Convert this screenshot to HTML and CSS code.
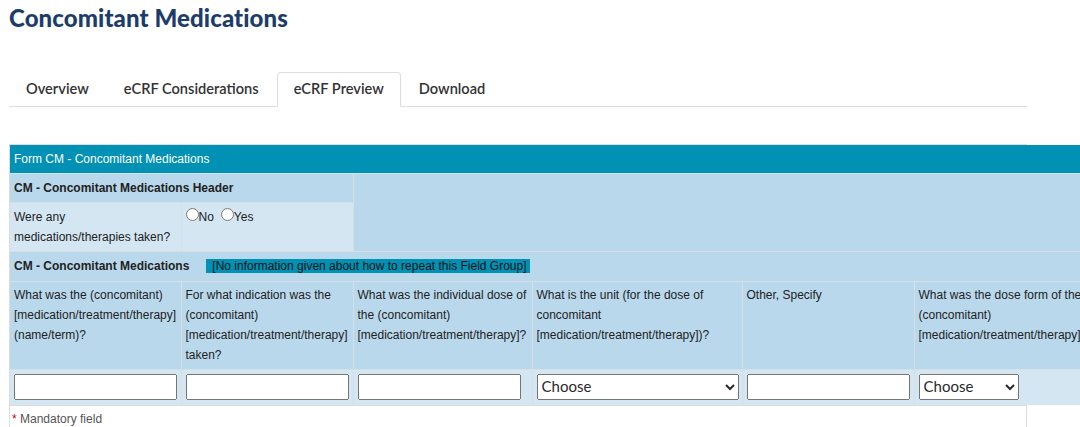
FILE: index.html
```html
<!DOCTYPE html>
<html lang="en">
<head>
<meta charset="utf-8">
<title>Concomitant Medications</title>
<link rel="stylesheet" href="styles.css">
</head>
<body>
<div class="page">
  <h1 class="title">Concomitant Medications</h1>
  <ul class="tabs">
    <li class="tab">Overview</li>
    <li class="tab">eCRF Considerations</li>
    <li class="tab active">eCRF Preview</li>
    <li class="tab">Download</li>
  </ul>
  <div class="panel">
    <table class="form">
      <colgroup>
        <col class="c1"><col class="c2"><col class="c3"><col class="c4"><col class="c5"><col class="c6">
      </colgroup>
      <tr>
        <td colspan="6" class="form-title">Form CM - Concomitant Medications</td>
      </tr>
      <tr>
        <td colspan="2" class="group">CM - Concomitant Medications Header</td>
        <td colspan="4" rowspan="2" class="blank"></td>
      </tr>
      <tr>
        <td class="light">Were any medications/therapies taken?</td>
        <td class="light radios"><input type="radio" name="taken" class="radio"><span class="opt">No</span><input type="radio" name="taken" class="radio"><span class="opt">Yes</span></td>
      </tr>
      <tr>
        <td colspan="6" class="group group2">CM - Concomitant Medications<span class="note">[No information given about how to repeat this Field Group]</span></td>
      </tr>
      <tr class="heads">
        <td>What was the (concomitant) [medication/treatment/therapy] (name/term)?</td>
        <td>For what indication was the (concomitant) [medication/treatment/therapy] taken?</td>
        <td>What was the individual dose of the (concomitant) [medication/treatment/therapy]?</td>
        <td>What is the unit (for the dose of concomitant [medication/treatment/therapy])?</td>
        <td>Other, Specify</td>
        <td>What was the dose form of the (concomitant) [medication/treatment/therapy]?</td>
      </tr>
      <tr class="inputs">
        <td><input type="text" class="field"></td>
        <td><input type="text" class="field"></td>
        <td><input type="text" class="field"></td>
        <td><select class="choose wide"><option>Choose</option></select></td>
        <td><input type="text" class="field"></td>
        <td><select class="choose narrow"><option>Choose</option></select></td>
      </tr>
    </table>
    <div class="mandatory"><span class="star">*</span> Mandatory field</div>
  </div>
</div>
</body>
</html>
```
FILE: styles.css
```css
html, body {
  margin: 0;
  padding: 0;
  overflow: hidden;
  background: #fff;
}
.page {
  padding: 0 9px;
  width: 1018px;
}
.title {
  margin: 2px 0 0;
  font-family: Lato, "Open Sans", sans-serif;
  font-weight: 900;
  font-size: 24px;
  letter-spacing: 0.1px;
  line-height: 32px;
  color: #1c3d6b;
}
.tabs {
  list-style: none;
  margin: 38px 0 0;
  padding: 0;
  display: flex;
  border-bottom: 1px solid #dddddd;
}
.tab {
  margin: 0 1px -1px 0;
  padding: 0 16px 2px;
  border: 1px solid transparent;
  border-radius: 4px 4px 0 0;
  font-family: Lato, "Open Sans", sans-serif;
  font-weight: 600;
  font-size: 14.6px;
  line-height: 31px;
  color: #333;
}
.tab.active {
  border-color: #dddddd;
  border-bottom-color: #fff;
  background: #fff;
}
.panel {
  margin-top: 37px;
  border: 1px solid #dcdcdc;
  width: 1016px;
}
.form {
  border-collapse: collapse;
  border-style: hidden;
  table-layout: fixed;
  width: 1104px;
  font-family: "Liberation Sans", Arial, sans-serif;
  font-size: 12px;
  line-height: 20px;
  color: #222;
}
.c1 { width: 171px; }
.c2 { width: 172px; }
.c3 { width: 179px; }
.c4 { width: 210px; }
.c5 { width: 172px; }
.c6 { width: 200px; }
.form td {
  border: 1px solid #d6dfe5;
  padding: 4px 4px;
  vertical-align: top;
  background: #b9d8ec;
}
.form td.form-title {
  background: #0091b4;
  color: #fff;
  border-color: #d0e6f0;
}
.form td.group {
  font-weight: 700;
}
.form td.group2 {
  padding-bottom: 5px;
}
.note {
  font-weight: 400;
  background: #0091b4;
  color: #111;
  margin-left: 17px;
  padding: 0 3px 0 6px;
}
.form td.light {
  background: #d4e6f2;
}
.radio {
  margin: 1px 0 0 0;
  width: 13px;
  height: 13px;
  vertical-align: top;
}
.opt {
  margin-right: 7px;
}
.heads td {
  padding-top: 3px;
  padding-bottom: 4px;
}
.inputs td {
  background: #d4e6f2;
  padding: 4px 4px 5px;
}
.field {
  box-sizing: border-box;
  width: 163px;
  height: 26px;
  margin: 0;
  font-size: 13px;
}
.choose {
  box-sizing: border-box;
  height: 26px;
  margin: 0;
  padding-top: 0;
  padding-bottom: 2px;
  font-family: Lato, "Open Sans", sans-serif;
  font-weight: 400;
  font-size: 15px;
  color: #2a2a2a;
}
.choose.wide { width: 202px; }
.choose.narrow { width: 100px; }
.mandatory {
  border-top: 1px solid #dcdcdc;
  padding: 4px 2px 0;
  font-family: "Liberation Sans", Arial, sans-serif;
  font-size: 12px;
  line-height: 18px;
  color: #555;
}
.star {
  color: #d40000;
}
```
